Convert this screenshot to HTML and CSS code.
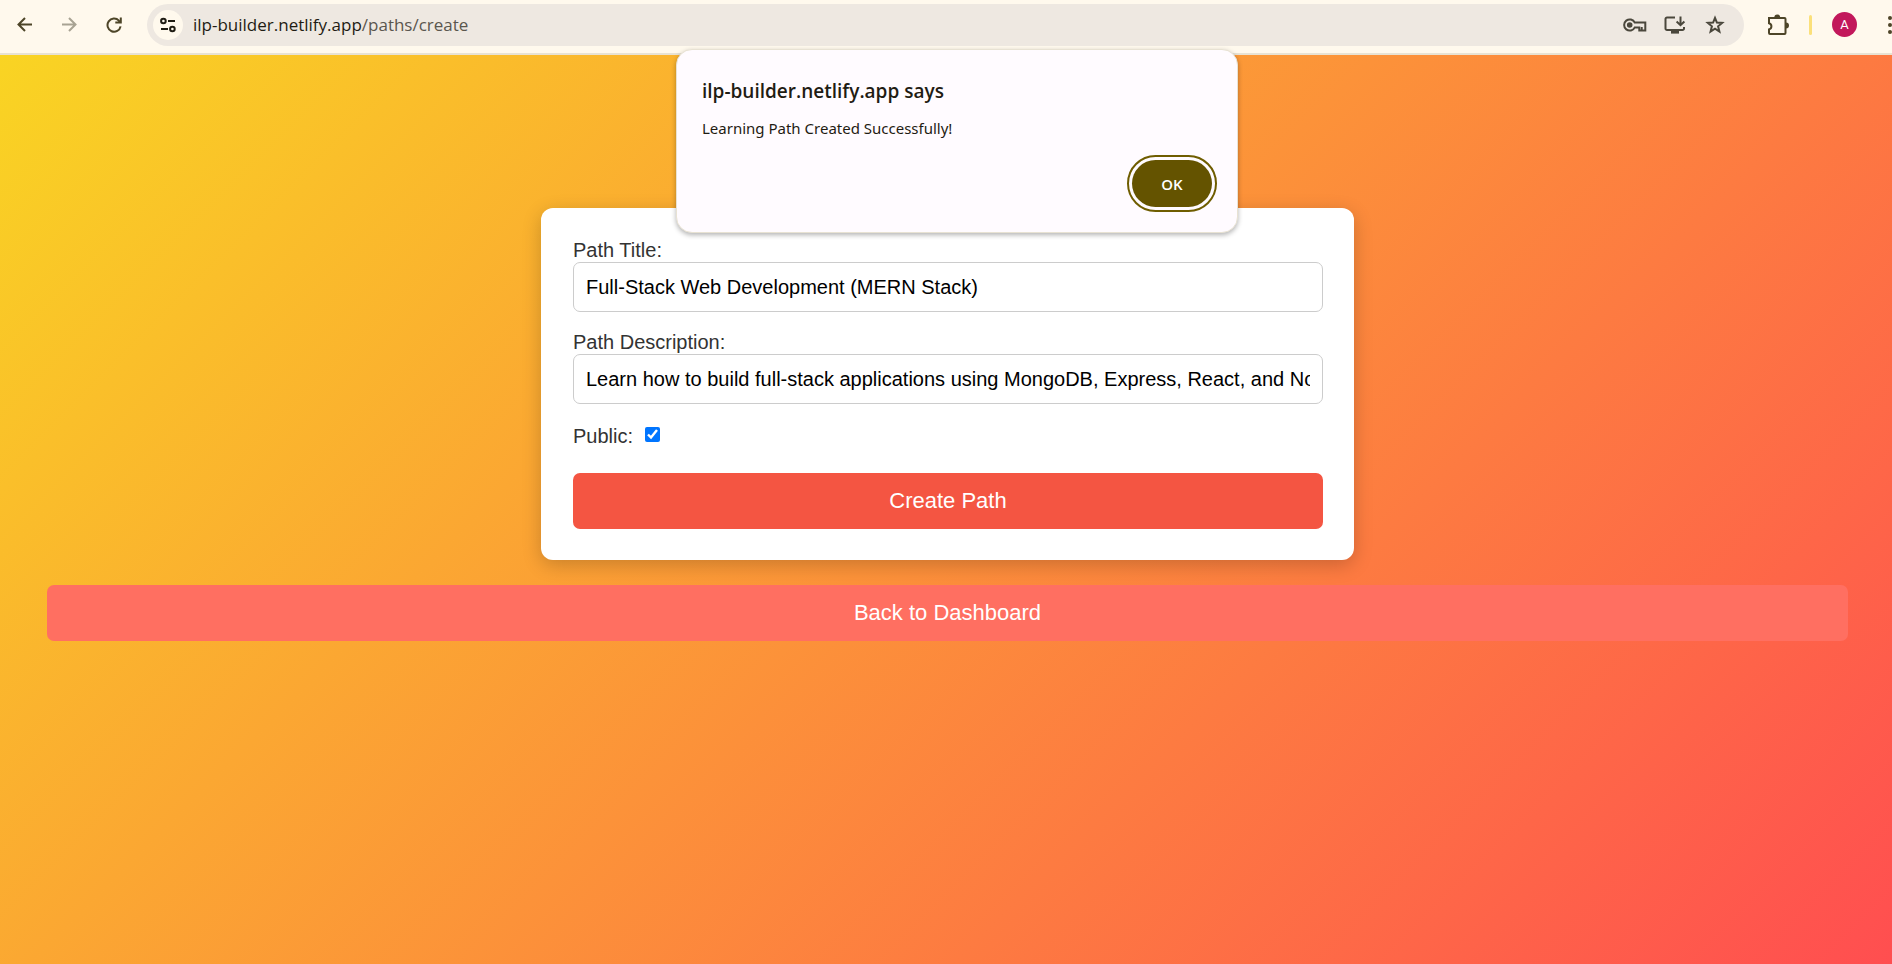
FILE: index.html
```html
<!DOCTYPE html>
<html lang="en">
<head>
<meta charset="utf-8">
<title>Create Path</title>
<link rel="stylesheet" href="styles.css">
</head>
<body>
<header class="toolbar">
  <nav class="nav-buttons" aria-label="Browser navigation">
    <button class="icon-button" type="button" aria-label="Back">
      <svg width="15" height="15" viewBox="0 0 15 15"><path d="M15 7.5H1.5M8 1L1.5 7.5L8 14"/></svg>
    </button>
    <button class="icon-button is-disabled" type="button" aria-label="Forward">
      <svg width="15" height="15" viewBox="0 0 15 15"><path d="M0 7.5H13.5M7 1L13.5 7.5L7 14"/></svg>
    </button>
    <button class="icon-button" type="button" aria-label="Reload">
      <svg width="16" height="16" viewBox="0 0 16 16"><path d="M14.6 9.4A6.6 6.6 0 1 1 12.9 3.6L14.3 5M9.3 5.4H14.8V0.6"/></svg>
    </button>
  </nav>
  <div class="omnibox">
    <button class="site-info" type="button" aria-label="Site information">
      <svg width="16" height="16" viewBox="0 0 16 16"><circle cx="3.4" cy="4" r="2.3"/><path d="M8 4H15M1 12H8"/><circle cx="12.4" cy="12" r="2.3"/></svg>
    </button>
    <p class="address">ilp-builder.netlify.app<span class="address-path">/paths/create</span></p>
    <button class="icon-button" type="button" aria-label="Passwords">
      <svg width="24" height="14" viewBox="0 0 24 14"><path d="M11.8 4.6A5.6 5.6 0 1 0 11.8 9.4H16.3V12.4H22.3V4.6Z"/><path d="M18.7 12V9"/><circle class="filled" cx="6.7" cy="7" r="1.8"/></svg>
    </button>
    <button class="icon-button" type="button" aria-label="Install app">
      <svg width="22" height="18" viewBox="0 0 22 18"><path d="M11 1.5H3A1.5 1.5 0 0 0 1.5 3V12.5A1.5 1.5 0 0 0 3 14H18.5A1.5 1.5 0 0 0 20 12.5V11M16.5 0.5V9M12.6 5.5L16.5 9.2L20.4 5.5"/><path class="filled" d="M8 15H14V16.6H8Z"/></svg>
    </button>
    <button class="icon-button" type="button" aria-label="Bookmark this page">
      <svg width="20" height="20" viewBox="0 0 20 20"><path d="M10 2.8L11.9 7.5L17.2 7.9L13.1 11.3L14.4 16.5L10 13.7L5.6 16.5L6.9 11.3L2.8 7.9L8.1 7.5Z"/></svg>
    </button>
  </div>
  <div class="tools">
    <button class="icon-button" type="button" aria-label="Extensions">
      <svg width="22" height="22" viewBox="0 0 22 22"><path d="M2 4H17.5A1 1 0 0 1 18.5 5V19A1 1 0 0 1 17.5 20H3A1 1 0 0 1 2 19V15.4A3.2 3.2 0 0 0 2 9.2V4Z"/><path class="filled" d="M8.3 3.5A2 2 0 0 1 12.3 3.5ZM19 9.5A2 2 0 0 1 19 13.5Z"/></svg>
    </button>
    <span class="divider"></span>
    <button class="avatar" type="button" aria-label="Profile A">A</button>
    <button class="menu-button" type="button" aria-label="Menu">
      <svg width="18" height="18" viewBox="0 0 18 18"><circle cx="9" cy="2" r="2"/><circle cx="9" cy="9" r="2"/><circle cx="9" cy="16" r="2"/></svg>
    </button>
  </div>
</header>

<main class="page">
  <form class="card">
    <div class="field">
      <label for="title">Path Title:</label>
      <input class="text-input" id="title" type="text" value="Full-Stack Web Development (MERN Stack)">
    </div>
    <div class="field">
      <label for="description">Path Description:</label>
      <input class="text-input" id="description" type="text" value="Learn how to build full-stack applications using MongoDB, Express, React, and Node.js">
    </div>
    <div class="check-row">
      <label for="public">Public:</label>
      <input class="checkbox" id="public" type="checkbox" checked>
    </div>
    <button class="action create" type="button">Create Path</button>
  </form>
  <button class="action back" type="button">Back to Dashboard</button>
</main>

<section class="dialog" role="alertdialog" aria-labelledby="dialog-title" aria-describedby="dialog-text">
  <h1 class="dialog-title" id="dialog-title">ilp-builder.netlify.app says</h1>
  <p class="dialog-text" id="dialog-text">Learning Path Created Successfully!</p>
  <button class="ok" type="button">OK</button>
</section>
</body>
</html>
```

FILE: styles.css
```css
* {
  box-sizing: border-box;
}

body {
  margin: 0;
  min-height: 100vh;
  display: flex;
  flex-direction: column;
  overflow: hidden;
  font-family: "Liberation Sans", Arial, sans-serif;
}

button {
  border: 0;
  padding: 0;
  font-family: inherit;
}

/* Browser toolbar */
.toolbar {
  display: flex;
  align-items: center;
  height: 55px;
  padding-bottom: 4px;
  background: #fff9ed;
  border-bottom: 2px solid #e8e2d3;
}

.nav-buttons {
  display: flex;
  gap: 15px;
  padding-left: 9px;
}

.icon-button {
  display: flex;
  align-items: center;
  justify-content: center;
  width: 30px;
  height: 30px;
  background: none;
  color: #4d4528;
}

.icon-button svg,
.site-info svg {
  fill: none;
  stroke: currentColor;
  stroke-width: 2;
}

.icon-button .filled {
  fill: currentColor;
}

.is-disabled {
  color: #a8a393;
}

.omnibox {
  flex: 1;
  display: flex;
  align-items: center;
  gap: 10px;
  height: 42px;
  margin-left: 18px;
  padding: 0 14px 0 6px;
  border-radius: 21px;
  background: #eee8e1;
}

.omnibox .icon-button {
  color: #4a473c;
}

.site-info {
  display: flex;
  align-items: center;
  justify-content: center;
  width: 30px;
  height: 30px;
  border-radius: 50%;
  background: #fff9ed;
  color: #1f1c13;
}

.address {
  flex: 1;
  margin: 0;
  font-family: "Open Sans", "Noto Sans", sans-serif;
  font-size: 17px;
  line-height: 24px;
  color: #1f1c13;
}

.address-path {
  color: #5a564e;
}

.tools {
  display: flex;
  align-items: center;
  margin-left: 19px;
}

.divider {
  width: 3px;
  height: 20px;
  margin: 0 20px 0 16px;
  border-radius: 2px;
  background: #fbe07a;
}

.avatar {
  width: 25px;
  height: 25px;
  border-radius: 50%;
  background: #c2185b;
  color: #fff;
  font-family: Roboto, sans-serif;
  font-size: 13px;
  line-height: 25px;
}

.menu-button {
  display: flex;
  width: 18px;
  margin: 0 -7px 0 24px;
  background: none;
  fill: #4d4528;
}

/* Page */
.page {
  flex: 1;
  display: flex;
  flex-direction: column;
  align-items: center;
  gap: 25px;
  padding: 153px 44px 25px 47px;
  background: linear-gradient(135deg, #f9d423, #ff4e50);
}

.card {
  display: flex;
  flex-direction: column;
  width: 100%;
  max-width: 813px;
  padding: 31px 31px 31px 32px;
  border-radius: 12px;
  background: #fff;
  box-shadow: 0 5px 19px rgba(0, 0, 0, 0.2);
  color: #333;
  font-size: 20px;
  line-height: 23px;
}

.field {
  display: flex;
  flex-direction: column;
  margin-bottom: 19px;
}

.text-input {
  height: 50px;
  padding: 0 12px;
  border: 1px solid #ccc;
  border-radius: 7px;
  background: #fff;
  color: #000;
  font-family: inherit;
  font-size: 20px;
}

.check-row {
  display: flex;
  align-items: center;
  gap: 12px;
  margin: 2px 0 25px;
}

.checkbox {
  width: 15px;
  height: 15px;
  margin: 0 0 4px;
  accent-color: #0075ff;
}

.action {
  width: 100%;
  height: 56px;
  border-radius: 7px;
  color: #fff;
  font-size: 22px;
}

.create {
  background: #f45542;
}

.back {
  background: #ff6f61;
}

/* Alert dialog laid over the page */
.dialog {
  position: absolute;
  top: 49px;
  left: calc(50% - 270px);
  display: flex;
  flex-direction: column;
  width: 562px;
  padding: 27px 25px 25px;
  border: 1px solid #e8e2d3;
  border-radius: 16px;
  background: #fffbff;
  box-shadow: 0 2px 5px rgba(0, 0, 0, 0.3);
  color: #1f1c13;
  font-family: "Open Sans", "Noto Sans", sans-serif;
}

.dialog-title {
  margin: 0 0 11px;
  font-size: 19px;
  font-weight: 600;
  line-height: 28px;
}

.dialog-text {
  margin: 0;
  font-family: "Noto Sans", "Open Sans", sans-serif;
  font-size: 15px;
  line-height: 24px;
}

.ok {
  align-self: flex-end;
  width: 80px;
  height: 47px;
  margin-top: 20px;
  border-radius: 24px;
  background: #645300;
  outline: 2px solid #6f5d00;
  outline-offset: 3px;
  color: #fff;
  font-size: 15px;
  font-weight: 600;
}
```
